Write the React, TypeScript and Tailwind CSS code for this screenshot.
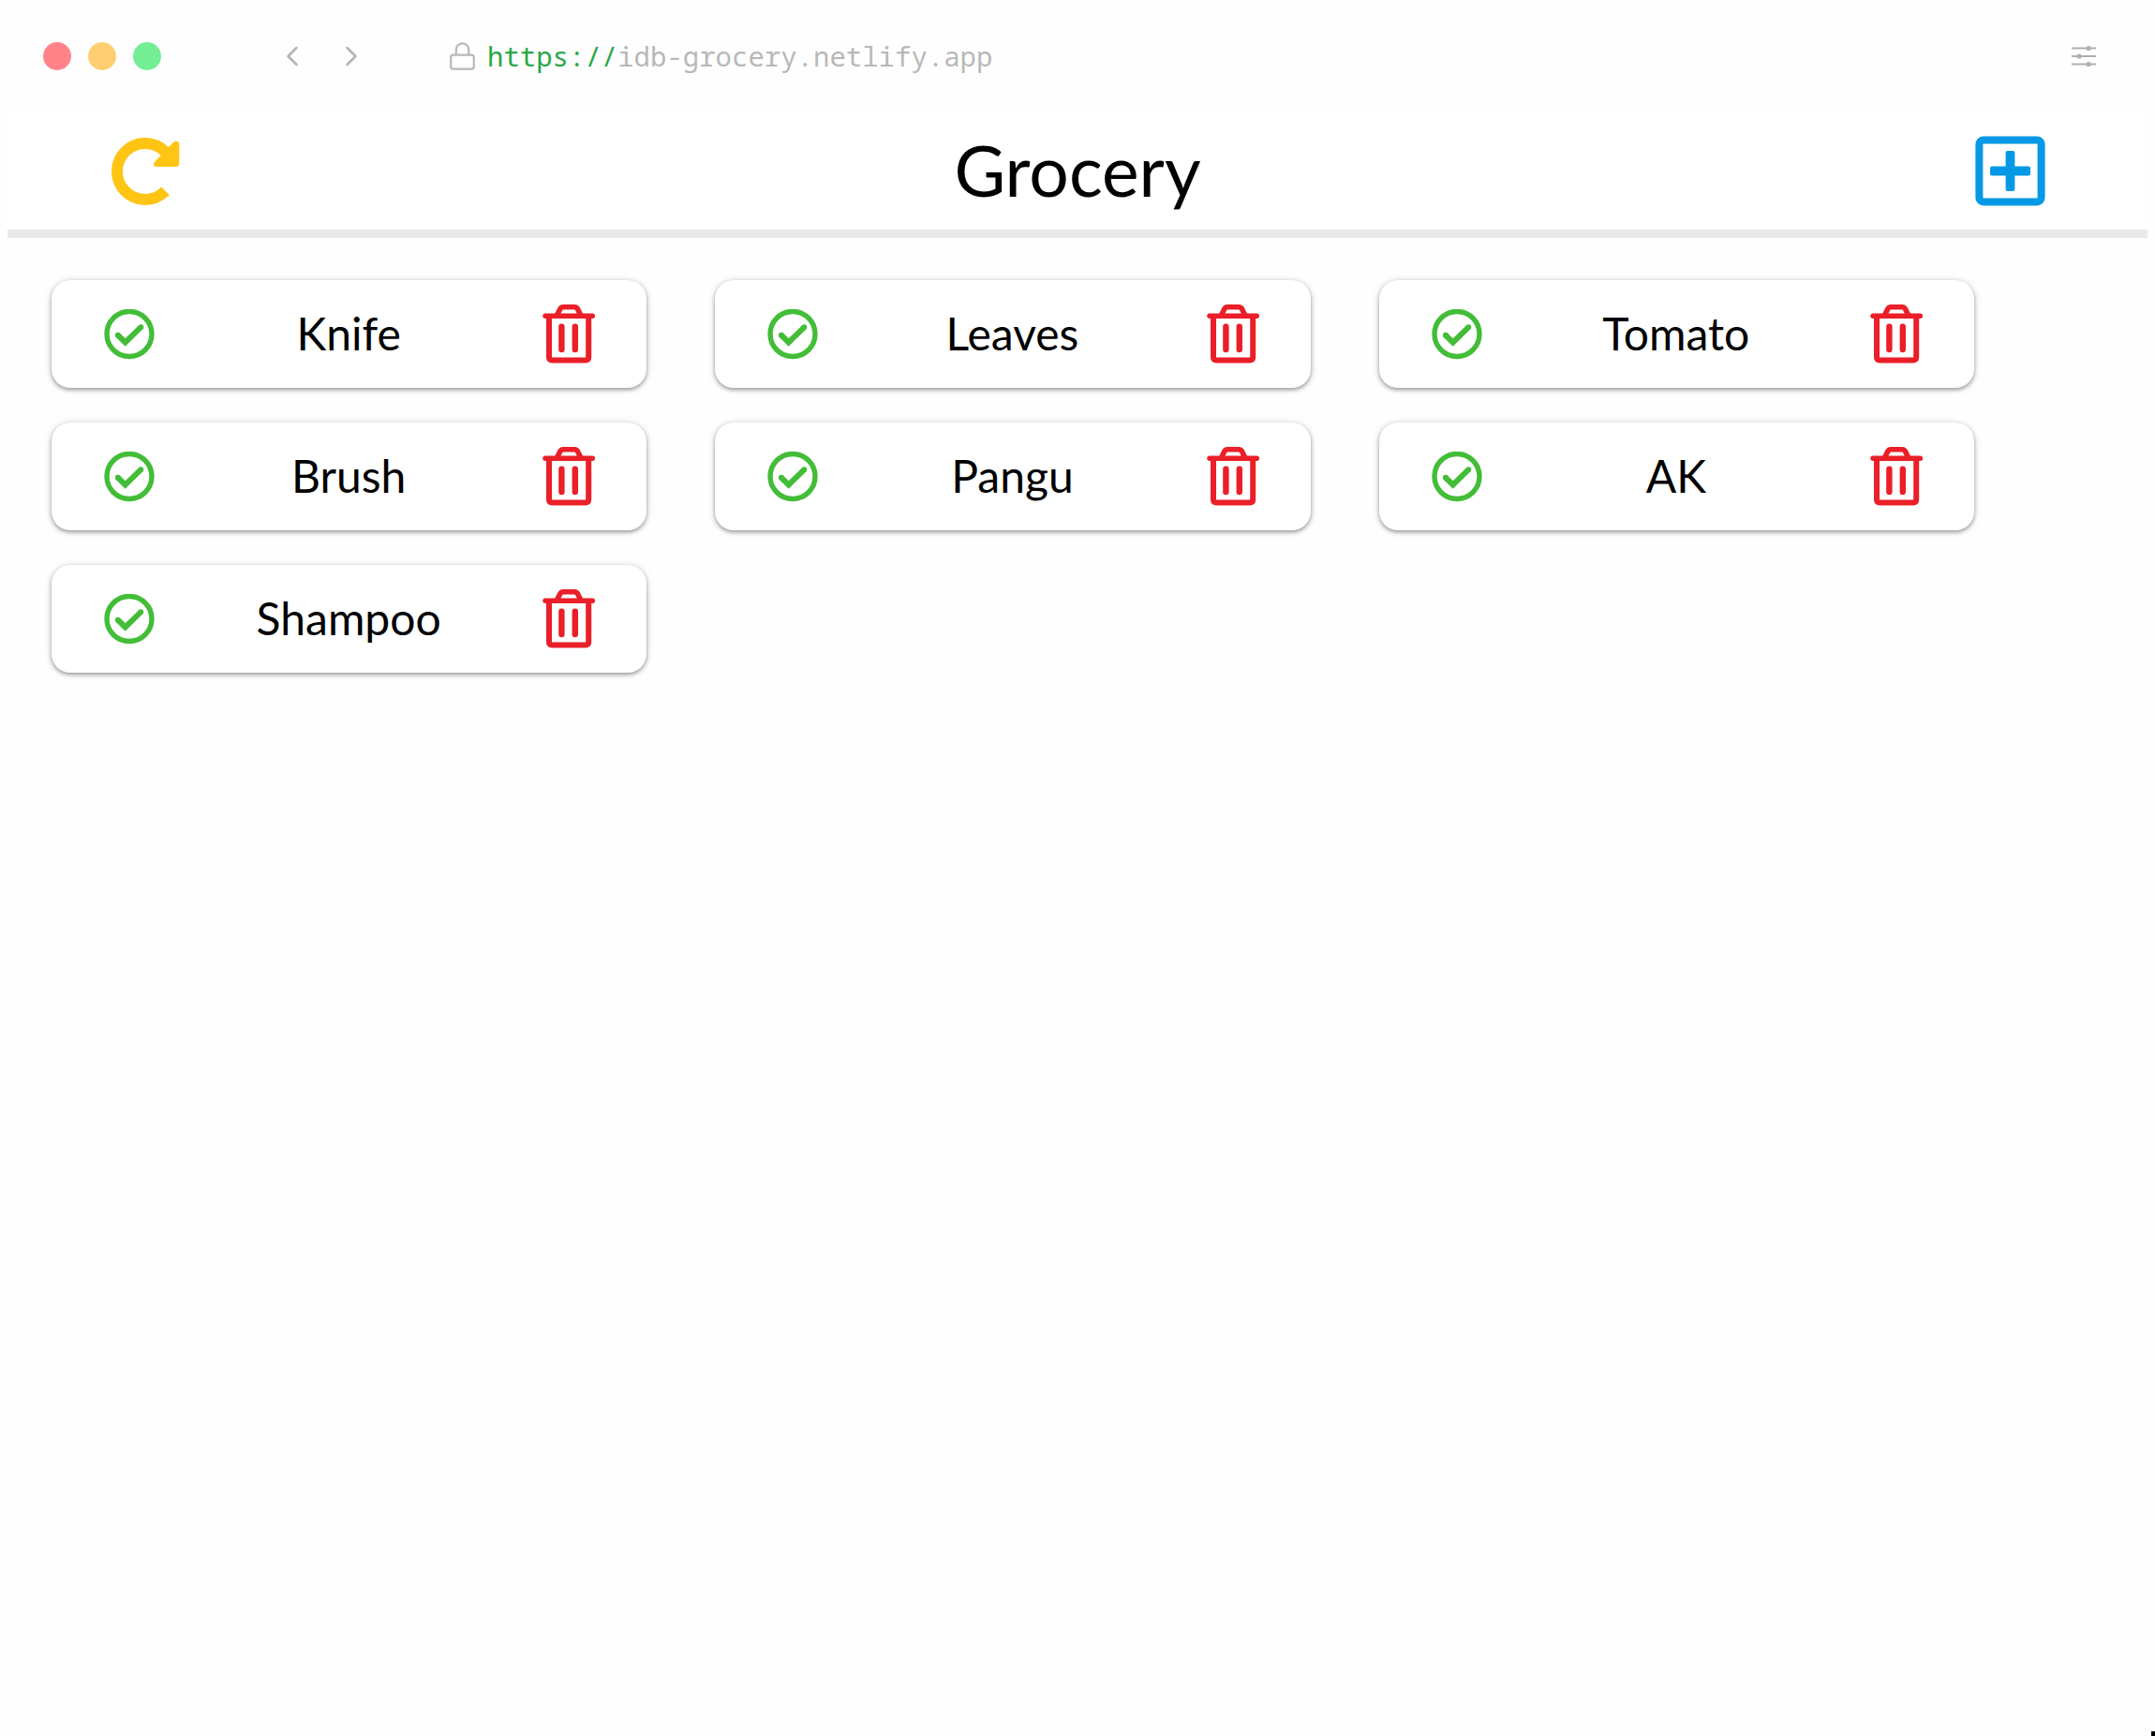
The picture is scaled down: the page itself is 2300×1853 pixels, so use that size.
const items = ["Knife", "Leaves", "Tomato", "Brush", "Pangu", "AK", "Shampoo"];

function BrowserBar() {
  return (
    <div className="flex h-[120px] items-center pl-[46px] pr-[63px]">
      <div className="flex gap-[18px]">
        <button type="button" aria-label="Close" className="size-[30px] rounded-full bg-[#ff8388]" />
        <button type="button" aria-label="Minimize" className="size-[30px] rounded-full bg-[#ffce72]" />
        <button type="button" aria-label="Maximize" className="size-[30px] rounded-full bg-[#74ee95]" />
      </div>
      <nav className="ml-[132px] flex gap-12 text-[#b4b4b4]">
        <button type="button" aria-label="Back">
          <svg width="16" height="24" viewBox="0 0 16 24" fill="none" stroke="currentColor" strokeWidth="2.5" strokeLinecap="round" strokeLinejoin="round">
            <path d="M12.5 3 3.5 12l9 9" />
          </svg>
        </button>
        <button type="button" aria-label="Forward">
          <svg width="16" height="24" viewBox="0 0 16 24" fill="none" stroke="currentColor" strokeWidth="2.5" strokeLinecap="round" strokeLinejoin="round">
            <path d="m2.5 3 9 9-9 9" />
          </svg>
        </button>
      </nav>
      <div className="ml-24 flex flex-1 items-center gap-[13px]">
        <svg aria-hidden="true" width="27" height="30" viewBox="0 0 27 30" fill="none" stroke="#b8b8b8" strokeWidth="2.2">
          <rect x="1.2" y="13.6" width="24.6" height="15" rx="2.6" />
          <path d="M6.8 13.6V8a6.7 6.7 0 0 1 13.4 0v5.6" />
        </svg>
        <a
          href="https://idb-grocery.netlify.app"
          className="font-['Noto_Sans_Mono','DejaVu_Sans_Mono',monospace] text-[29px] leading-10 text-[#b8b8b8]"
        >
          <span className="text-[#28a745]">https://</span>idb-grocery.netlify.app
        </a>
      </div>
      <button type="button" aria-label="Settings">
        <svg width="26" height="24" viewBox="0 0 26 24" fill="#b0b0b0" stroke="#b0b0b0" strokeWidth="1.8">
          <path d="M0 3.5h26M0 12h26M0 20.5h26" />
          <g stroke="none">
            <circle cx="18" cy="3.5" r="2.6" />
            <circle cx="8" cy="12" r="2.6" />
            <circle cx="18" cy="20.5" r="2.6" />
          </g>
        </svg>
      </button>
    </div>
  );
}

function Header() {
  return (
    <header className="mx-2 flex h-[134px] items-center justify-between border-b-[9px] border-[#e9e9e9] bg-white pl-[111px] pr-[109px]">
      <button type="button" aria-label="Refresh">
        <svg width="73" height="72" viewBox="0 0 73 72">
          <path d="M56.4 57.9A30 30 0 1 1 57.2 14.8" fill="none" stroke="#ffc414" strokeWidth="12" />
          <path d="M53 54.2 60.2 61.4" stroke="#ffc414" strokeWidth="2.6" strokeLinecap="round" />
          <path
            d="M57 14 66.5 4.6Q68 3.4 70 3.8 72.2 4.2 72.2 7V27.5Q72.2 31 68.8 31H48.5Q45 31 45 28.2 45 26.7 46.5 25.2L53 18.6Z"
            fill="#ffc414"
          />
        </svg>
      </button>
      <h1 className="pb-0.5 text-[75px] leading-none">Grocery</h1>
      <button type="button" aria-label="Add item">
        <svg width="75" height="75" viewBox="0 0 75 75" fill="none" stroke="#0399e6">
          <rect x="4.4" y="4.4" width="66.2" height="66.2" rx="4.5" strokeWidth="8" />
          <g fill="#0399e6" stroke="none">
            <rect x="16" y="32.6" width="43" height="9.8" rx="2" />
            <rect x="32.6" y="16" width="9.8" height="43" rx="2" />
          </g>
        </svg>
      </button>
    </header>
  );
}

function GroceryCard({ name }: { name: string }) {
  return (
    <li className="flex h-[115px] items-center justify-between rounded-[20px] bg-white pl-14 pr-[55px] shadow-[0_2px_4px_rgba(0,0,0,0.34),0_1px_9px_rgba(0,0,0,0.14)]">
      <button type="button" aria-label={`Mark ${name} as done`}>
        <svg width="54" height="54" viewBox="0 0 54 54" fill="none" stroke="#43bd38">
          <circle cx="27" cy="26.5" r="24" strokeWidth="5.4" />
          <path d="M14.6 27.5 22.7 35.5 39.7 18.8" strokeWidth="6" />
          <g fill="#43bd38" stroke="none">
            <circle cx="14.8" cy="27.7" r="2.9" />
            <circle cx="39.4" cy="19.1" r="2.9" />
          </g>
        </svg>
      </button>
      <span className="pb-0.5 text-5xl">{name}</span>
      <button type="button" aria-label={`Delete ${name}`}>
        <svg width="56" height="63" viewBox="0 0 56 63" fill="none" stroke="#ea1f28">
          <path d="M15.4 11.5 18.8 4.8Q19.9 2.8 22.2 2.8H34.2Q36.5 2.8 37.5 4.8L40.8 11.5" strokeWidth="5.6" />
          <path d="M3 12.3H53.4" strokeWidth="5.4" strokeLinecap="round" />
          <path d="M7 12.3V56.3Q7 59.4 10.2 59.4H46Q49.2 59.4 49.2 56.3V12.3" strokeWidth="6" />
          <path d="M20.4 23.8V48M34.8 23.8V48" strokeWidth="6.4" strokeLinecap="round" />
        </svg>
      </button>
    </li>
  );
}

export default function App() {
  return (
    <div className="relative min-h-screen bg-[#fefefe] font-['Lato',sans-serif] text-black">
      <BrowserBar />
      <Header />
      <main>
        <ul className="grid grid-cols-3 gap-x-[73px] gap-y-[37px] pb-14 pl-[55px] pr-[193px] pt-[45px]">
          {items.map((name) => (
            <GroceryCard key={name} name={name} />
          ))}
        </ul>
      </main>
      <div className="absolute bottom-0 right-0 h-[5px] w-1 bg-black" />
    </div>
  );
}
